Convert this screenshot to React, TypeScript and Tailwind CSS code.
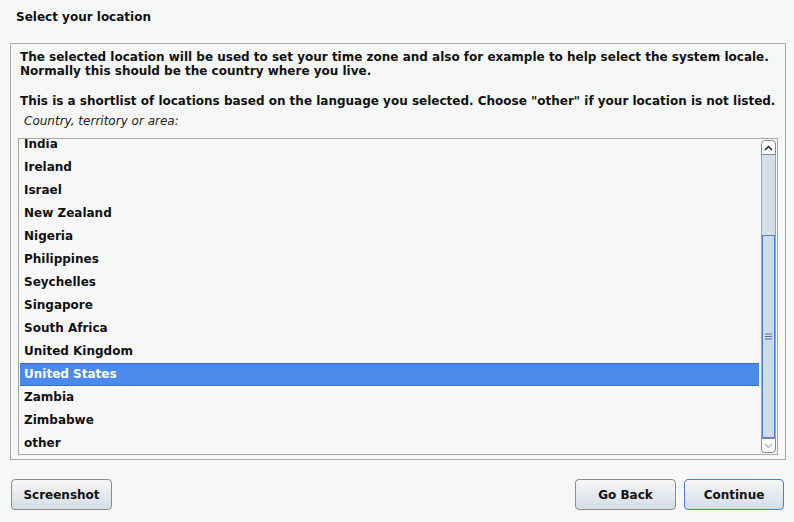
import React from "react";

const items = [
  "India",
  "Ireland",
  "Israel",
  "New Zealand",
  "Nigeria",
  "Philippines",
  "Seychelles",
  "Singapore",
  "South Africa",
  "United Kingdom",
  "United States",
  "Zambia",
  "Zimbabwe",
  "other",
];

export default function App() {
  return (
    <div
      className="w-[794px] h-[522px] bg-[#f6f8f7] text-[12px] font-bold text-[#111] flex flex-col overflow-hidden"
      style={{ fontFamily: '"DejaVu Sans", sans-serif' }}
    >
      <div className="h-[43px] pl-[16px] pt-[8px] leading-[18px]">Select your location</div>
      <div className="ml-[10px] w-[776px] h-[417px] border border-[#a8aaa9] flex flex-col pl-[7px] pr-[7px]">
        <div className="pt-[6px] pl-[2px] leading-[14px] whitespace-nowrap">
          <div>The selected location will be used to set your time zone and also for example to help select the system locale.</div>
          <div>Normally this should be the country where you live.</div>
          <div className="mt-[16px]">This is a shortlist of locations based on the language you selected. Choose "other" if your location is not listed.</div>
        </div>
        <div className="pl-[6px] mt-[6px] leading-[14px] italic font-normal text-[12px] text-[#222]">Country, territory or area:</div>
        <div className="mt-[10px] h-[317px] border border-[#a8aaa9] bg-[#f8f8f8] flex overflow-hidden">
          <div className="flex-1 overflow-hidden pl-[1px] mr-[2px]">
            <div className="-mt-[6px]">
              {items.map((it) => (
                <div
                  key={it}
                  className={
                    "h-[23px] pl-[4px] " +
                    (it === "United States"
                      ? "bg-[#4b8aea] text-white border-t border-b border-[#3a6fc0] leading-[21px]"
                      : "leading-[23px]")
                  }
                >
                  {it}
                </div>
              ))}
            </div>
          </div>
          <div className="w-[15px] mr-[1px] mt-[1px] mb-[1px] flex flex-col">
            <div className="h-[15px] bg-white border border-[#8a8a8a] rounded-t-[4px] flex items-center justify-center">
              <svg width="9" height="6" viewBox="0 0 9 6">
                <path d="M1 5 L4.5 1.5 L8 5" stroke="#222" strokeWidth="1.5" fill="none" />
              </svg>
            </div>
            <div className="flex-1 bg-[#d5dfe8] border-l border-r border-[#9aa4ad] flex flex-col">
              <div className="h-[80px]" />
              <div className="flex-1 bg-[#cfdbe6] border border-[#4a7fd4] flex items-center justify-center">
                <svg width="7" height="7" viewBox="0 0 7 7">
                  <path d="M0 1 H7 M0 3.5 H7 M0 6 H7" stroke="#4a6fa8" strokeWidth="1" />
                </svg>
              </div>
            </div>
            <div className="h-[15px] bg-white border border-[#8a8a8a] rounded-b-[4px] flex items-center justify-center">
              <svg width="9" height="6" viewBox="0 0 9 6">
                <path d="M1 1 L4.5 4.5 L8 1" stroke="#aab" strokeWidth="1.2" fill="none" />
              </svg>
            </div>
          </div>
        </div>
      </div>
      <div className="flex mt-[19px] pl-[11px] pr-[10px] items-start">
        <button className="w-[101px] h-[31px] rounded-[4px] border border-[#8d8d8d] bg-gradient-to-b from-[#f6f6f6] to-[#d4dde6] font-bold">
          Screenshot
        </button>
        <div className="flex-1" />
        <button className="w-[101px] h-[31px] rounded-[4px] border border-[#8d8d8d] bg-gradient-to-b from-[#f6f6f6] to-[#d4dde6] font-bold">
          Go Back
        </button>
        <button className="ml-[8px] w-[100px] h-[31px] rounded-[4px] border border-[#4a7fd4] bg-gradient-to-b from-[#f6f6f6] to-[#d4dde6] font-bold">
          Continue
        </button>
      </div>
    </div>
  );
}
